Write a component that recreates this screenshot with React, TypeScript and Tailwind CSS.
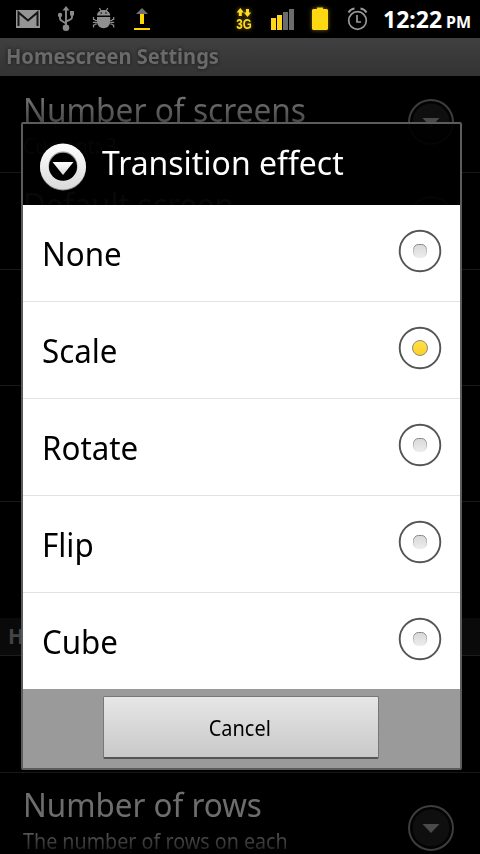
import type { ReactNode } from "react";

const effects = ["None", "Scale", "Rotate", "Flip", "Cube"];

function StatusIcons() {
  return (
    <div className="flex h-[38px] items-center">
      <svg className="ml-4" width="24" height="38" viewBox="16 0 24 38">
        <rect x="16" y="10" width="24" height="18" fill="#959595" />
        <path d="M18.5 26V12.5L28 20.5L37.5 12.5V26" fill="none" stroke="#151515" strokeWidth="2" />
      </svg>
      <svg className="ml-4" width="20" height="38" viewBox="56 0 20 38">
        <g fill="none" stroke="#8a8a8a" strokeWidth="1.9">
          <path d="M66 9V27M60 15v3.500q0 1.500 2 2.500l4 2.500M72 14v3.500q0 1.500-2 2.200l-4 2" />
        </g>
        <path d="M66 6l3.500 4.500h-7zM70 11h4v4.500h-4z" fill="#8a8a8a" />
        <circle cx="60" cy="15" r="2.200" fill="#8a8a8a" />
        <circle cx="66" cy="27.800" r="3.300" fill="#8a8a8a" />
      </svg>
      <svg className="ml-[16px]" width="24" height="38" viewBox="92 0 24 38">
        <path d="M97 15.500c0-7.500 13.200-7.500 13.200 0zM97 17h13.200v5a6.600 6.200 0 0 1-13.200 0z" fill="#8f8f8f" />
        <path
          d="M99.500 8l1.500 3M107.700 8l-1.500 3M97 20.500h-1.500l-1-1h-1V17M97 22.300h-4M97 24h-1.500l-1 1h-1V27.500M110.200 20.500h1.500l1-1h1V17M110.200 22.300h4M110.200 24h1.500l1 1h1V27.500"
          fill="none"
          stroke="#8f8f8f"
          strokeWidth="1.2"
        />
        <circle cx="101.200" cy="13" r=".8" fill="#000" />
        <circle cx="106" cy="13" r=".8" fill="#000" />
      </svg>
      <svg className="ml-[18px]" width="16" height="38" viewBox="134 0 16 38">
        <path d="M142 8l6 6h-12z" fill="#707070" />
        <path d="M140 14h4v10h-4zM134 28h16v2h-16z" fill="#ffd800" />
      </svg>
      <svg className="ml-[82px] drop-shadow-[0_0_2px_#8a7000]" width="24" height="38" viewBox="232 0 24 38">
        <path
          d="M240.300 8l3.700 4.500h-2.200v3.500h-3v-3.500h-2.200zM247.500 17l-3.700-4.500h2.200V9h3v3.500h2.200z"
          fill="#ffdc20"
        />
        <text
          x="236.200"
          y="29"
          fontFamily="Liberation Sans"
          fontWeight="700"
          fontSize="14"
          textLength="15.500"
          lengthAdjust="spacingAndGlyphs"
          fill="#ffdc20"
        >
          3G
        </text>
      </svg>
      <svg className="ml-[14px]" width="26" height="38" viewBox="270 0 26 38">
        <path d="M271 18h5v12h-5zM277 15h5v15h-5z" fill="#ffd61c" />
        <path d="M283 12h5v18h-5zM289 9h5v21h-5z" fill="#6c6c6c" />
      </svg>
      <svg className="ml-[14px] drop-shadow-[0_0_2px_#806800]" width="20" height="38" viewBox="310 0 20 38">
        <path d="M317 9V7.500h6V9h4l1 1v19l-1 1h-14l-1-1V10l1-1z" fill="#ffd814" />
      </svg>
      <svg className="ml-[16px]" width="24" height="38" viewBox="346 0 24 38">
        <g fill="none" stroke="#9a9a9a">
          <circle cx="357.500" cy="20.500" r="8.800" strokeWidth="1.700" />
          <path d="M357 15v7h4" strokeWidth="1.700" />
          <path d="M348.500 12.500q2-3.500 6-4M366.500 12.500q-2-3.500-6-4" strokeWidth="2" />
        </g>
      </svg>
    </div>
  );
}

function MoreButton() {
  return (
    <svg width="48" height="48" viewBox="0 0 48 48" className="shrink-0">
      <circle cx="24" cy="24" r="22" fill="#030303" stroke="#3d3d3d" strokeWidth="2" />
      <circle cx="24" cy="24" r="18.500" fill="#0f0f0f" />
      <path d="M15.500 20h17L24 29z" fill="#4a4a4a" />
    </svg>
  );
}

function Row({ className, children }: { className: string; children?: ReactNode }) {
  return (
    <div className={`flex shrink-0 items-start justify-between border-b border-[#181818] pl-[23px] pr-[25px] ${className}`}>
      {children}
    </div>
  );
}

function Radio({ checked }: { checked: boolean }) {
  return (
    <svg width="44" height="44" viewBox="0 0 44 44">
      <defs>
        <linearGradient id="on" x2="0" y2="1">
          <stop stopColor="#ffe04e" />
          <stop offset="1" stopColor="#fccf26" />
        </linearGradient>
        <linearGradient id="off" x2="0" y2="1">
          <stop stopColor="#d8d8d8" />
          <stop offset="1" stopColor="#ececec" />
        </linearGradient>
        <linearGradient id="rim" x2="0" y2="1">
          <stop stopColor="#858585" />
          <stop offset="1" stopColor="#ececec" />
        </linearGradient>
      </defs>
      <circle cx="22" cy="22" r="20.300" fill="#fff" stroke="#555" strokeWidth="1.900" />
      {checked ? (
        <circle cx="22" cy="22" r="7.500" fill="url(#on)" stroke="#8f8a78" />
      ) : (
        <rect x="15.500" y="15.500" width="13" height="13" rx="5" fill="url(#off)" stroke="url(#rim)" />
      )}
    </svg>
  );
}

export default function App() {
  return (
    <div className="relative flex h-[854px] w-[480px] flex-col overflow-hidden bg-black font-['Noto_Sans',sans-serif]">
      <header className="flex h-[38px] shrink-0 items-center justify-between pr-[10px]">
        <StatusIcons />
        <div className="flex items-baseline gap-1 font-bold text-white">
          <span className="w-[59px] origin-left text-[23px] leading-[38px]">12:22</span>
          <span className="w-[24px] origin-left text-[16px]">PM</span>
        </div>
      </header>
      <h1 className="flex h-[38px] shrink-0 items-center bg-linear-to-b from-[#404040] to-[#333] pb-[3px] pl-[6px] text-[22px] font-bold text-[#6a6a6a] [text-shadow:0_0_4px_#151515]">
        <span className="origin-left scale-x-[0.912] whitespace-nowrap">Homescreen Settings</span>
      </h1>

      <Row className="h-[97px]">
        <div className="pt-[12px]">
          <div className="origin-left scale-x-[0.958] whitespace-nowrap bg-linear-to-b from-[#6d6d6d] from-30% to-[#383838] bg-clip-text text-[33px] leading-[44px] text-transparent">
            Number of screens
          </div>
          <div className="origin-left scale-x-[0.95] text-[21px] leading-7 text-[#555]">Current: 3</div>
        </div>
        <div className="pt-[22px]">
          <MoreButton />
        </div>
      </Row>
      <Row className="h-[97px]">
        <div className="origin-left scale-x-[0.94] pt-[10px] text-[33px] leading-[44px] text-[#6d6d6d]">Default screen</div>
        <div className="pt-[22px]">
          <MoreButton />
        </div>
      </Row>
      <Row className="h-[116px]" />
      <Row className="h-[116px]" />
      <Row className="h-[116px] border-transparent" />
      <h2 className="flex h-[38px] shrink-0 items-center border-b border-[#1c1c1c] bg-[#0a0a0a] pl-2 text-[21px] font-bold text-[#444]">
        H
      </h2>
      <Row className="h-[117px]" />
      <Row className="h-[117px]">
        <div className="pt-[10px]">
          <div className="origin-left scale-x-[0.95] whitespace-nowrap text-[33px] leading-[44px] text-[#6d6d6d]">Number of rows</div>
          <div className="origin-left scale-x-[0.938] whitespace-nowrap bg-linear-to-b from-[#555] from-25% to-[#181818] bg-clip-text text-[21px] leading-7 text-transparent">
            The number of rows on each
          </div>
        </div>
        <div className="pt-[31px]">
          <MoreButton />
        </div>
      </Row>

      <div className="absolute left-[21px] top-[122px] flex h-[648px] w-[441px] flex-col rounded-[2px] border-2 border-[#5c5c5c]">
        <div className="flex h-[81px] shrink-0 items-center gap-[15px] bg-black/92 pl-[16px]">
          <svg width="48" height="48" viewBox="0 0 48 48" className="mt-[5px] shrink-0">
            <defs>
              <linearGradient id="ring" x2="0" y2="1">
                <stop stopColor="#fff" />
                <stop offset="1" stopColor="#dadada" />
              </linearGradient>
            </defs>
            <circle cx="24" cy="24.600" r="23" fill="#888" />
            <circle cx="24" cy="23.500" r="23" fill="url(#ring)" />
            <circle cx="24" cy="23" r="14.500" fill="#999" />
            <circle cx="24" cy="23.800" r="14" fill="#000" />
            <path d="M13.500 19h21L24 32z" fill="url(#ring)" />
          </svg>
          <span className="-mt-1 origin-left scale-x-[0.967] whitespace-nowrap text-[33px] leading-[44px] text-white">Transition effect</span>
        </div>
        <ul className="flex shrink-0 flex-col bg-white">
          {effects.map((effect) => (
            <li
              key={effect}
              className="flex h-[97px] items-center justify-between border-b border-[#e2e2e2] pl-[19px] pr-[18px] last:h-[96px] last:border-0"
            >
              <span className="origin-left scale-x-[0.948] pt-[2px] text-[33px] leading-[44px] text-black">{effect}</span>
              <span className="-mt-1">
                <Radio checked={effect === "Scale"} />
              </span>
            </li>
          ))}
        </ul>
        <div className="flex flex-1 bg-[#9a9a9a] pl-[80px] pt-[7px]">
          <button className="h-[63px] w-[276px] rounded-[2px] border border-[#777] border-b-2 border-b-[#555] bg-linear-to-b from-[#e6e6e6] to-[#c9c9c9] text-[21px] text-black">
            <span className="inline-block scale-x-[0.95] pr-[2px] pt-[3px]">Cancel</span>
          </button>
        </div>
      </div>
    </div>
  );
}
